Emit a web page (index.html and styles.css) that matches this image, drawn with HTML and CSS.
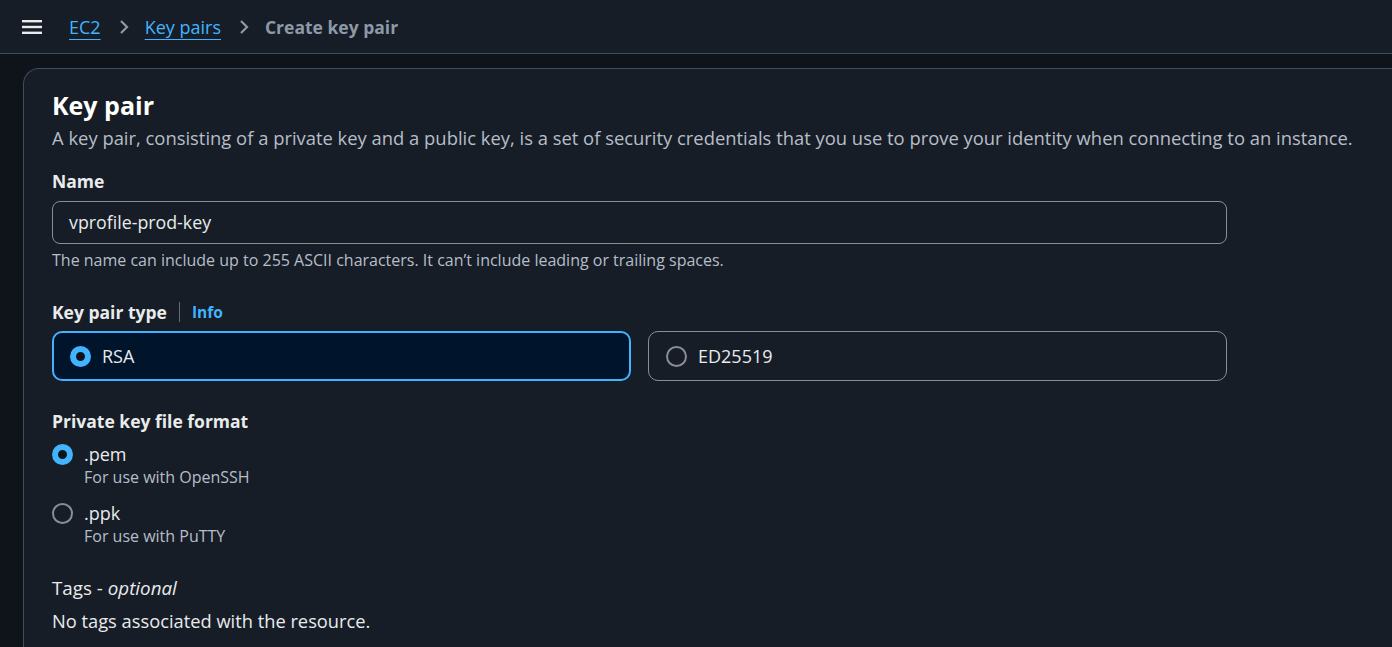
FILE: index.html
```html
<!DOCTYPE html>
<html>
<head>
<meta charset="utf-8">
<link rel="stylesheet" href="styles.css">
</head>
<body>
<header class="topbar">
  <svg class="menu" width="20" height="16" viewBox="0 0 20 16"><rect x="0" y="1" width="20" height="2.4" fill="#e9ebed"/><rect x="0" y="6.8" width="20" height="2.4" fill="#e9ebed"/><rect x="0" y="12.6" width="20" height="2.4" fill="#e9ebed"/></svg>
  <nav class="crumbs">
    <a class="crumb-link" href="#">EC2</a>
    <svg class="chev" width="12" height="16" viewBox="0 0 12 16"><path d="M3 2 L9 8 L3 14" fill="none" stroke="#8d99a8" stroke-width="2.2"/></svg>
    <a class="crumb-link" href="#">Key pairs</a>
    <svg class="chev" width="12" height="16" viewBox="0 0 12 16"><path d="M3 2 L9 8 L3 14" fill="none" stroke="#8d99a8" stroke-width="2.2"/></svg>
    <span class="crumb-current">Create key pair</span>
  </nav>
</header>
<main class="page">
  <section class="card">
    <h1 class="title">Key pair</h1>
    <p class="desc">A key pair, consisting of a private key and a public key, is a set of security credentials that you use to prove your identity when connecting to an instance.</p>

    <div class="field">
      <div class="label">Name</div>
      <div class="input"><span class="input-value">vprofile-prod-key</span></div>
      <div class="hint">The name can include up to 255 ASCII characters. It can’t include leading or trailing spaces.</div>
    </div>

    <div class="field field-type">
      <div class="label-row"><span class="label">Key pair type</span><span class="sep"></span><a class="info" href="#">Info</a></div>
      <div class="tiles">
        <div class="tile tile-on"><span class="radio radio-on"></span><span class="tile-text">RSA</span></div>
        <div class="tile"><span class="radio"></span><span class="tile-text">ED25519</span></div>
      </div>
    </div>

    <div class="field field-format">
      <div class="label">Private key file format</div>
      <div class="opt">
        <span class="radio radio-on"></span>
        <div class="opt-body"><div class="opt-title">.pem</div><div class="opt-desc">For use with OpenSSH</div></div>
      </div>
      <div class="opt">
        <span class="radio"></span>
        <div class="opt-body"><div class="opt-title">.ppk</div><div class="opt-desc">For use with PuTTY</div></div>
      </div>
    </div>

    <div class="tags">
      <div class="tags-title">Tags - <i>optional</i></div>
      <div class="tags-empty">No tags associated with the resource.</div>
    </div>
  </section>
</main>
</body>
</html>
```
FILE: styles.css
```css
* { box-sizing: border-box; }
html, body { margin: 0; padding: 0; }
body {
  background: #0f141a;
  color: #e9ebed;
  font-family: "Open Sans", "Noto Sans", sans-serif;
  height: 647px;
  overflow: hidden;
}
.topbar {
  height: 54px;
  background: #161d26;
  border-bottom: 1px solid #414d5c;
  display: flex;
  align-items: center;
  padding-left: 22px;
}
.menu { display: block; margin-right: 27px; }
.crumbs { display: flex; align-items: center; font-size: 18px; }
.crumb-link { color: #42b4ff; text-decoration: underline; text-underline-offset: 5px; text-decoration-thickness: 1px; }
.chev { margin: 0 15px 0 17px; }
.crumb-current { color: #8d99a8; font-weight: 700; font-size: 17.5px; }
.page { padding: 14px 0 0 23px; }
.card {
  background: #161d26;
  border: 1px solid #414d5c;
  border-right: none;
  border-bottom: none;
  border-radius: 16px 0 0 0;
  padding: 20px 0 40px 28px;
  min-height: 600px;
}
.title { margin: 0; font-size: 25px; font-weight: 700; line-height: 32px; color: #fff; }
.desc { margin: 4px 0 0; font-size: 18.4px; line-height: 26px; color: #b6bec9; white-space: nowrap; }
.field { margin-top: 18px; }
.label { font-size: 17.5px; font-weight: 700; line-height: 24px; }
.input {
  margin-top: 8px;
  width: 1175px;
  height: 43px;
  border: 1px solid #8c8c94;
  border-radius: 8px;
  padding: 0 0 0 16px;
  font-size: 17.8px;
  line-height: 41px;
}
.input-value { display: inline-block; }
.hint { margin-top: 5px; font-size: 16px; line-height: 22px; color: #b6bec9; }
.field-type { margin-top: 29px; }
.label-row { display: flex; align-items: center; }
.sep { width: 1px; height: 20px; background: #5f6b7a; margin: 0 12px 0 12px; }
.info { color: #42b4ff; font-weight: 700; font-size: 15.5px; text-decoration: none; }
.tiles { display: flex; gap: 17px; margin-top: 7px; }
.tile {
  width: 579px;
  height: 50px;
  border: 1px solid #8c8c94;
  border-radius: 10px;
  display: flex;
  align-items: center;
  padding-left: 17px;
}
.tile-on { border: 2px solid #42b4ff; background: #00142b; padding-left: 16px; }
.tile-text { font-size: 18px; margin-left: 11px; }
.radio {
  width: 21px; height: 21px;
  border-radius: 50%;
  border: 2px solid #8c8c94;
  flex: none;
}
.radio-on { border: 6.5px solid #42b4ff; background: #0f141a; }
.field-format { margin-top: 28px; }
.opt { display: flex; align-items: flex-start; margin-top: 9px; }
.opt + .opt { margin-top: 13px; }
.opt .radio { margin-top: 2px; }
.opt-body { margin-left: 11px; }
.opt-title { font-size: 18px; line-height: 24px; }
.opt-desc { font-size: 16px; line-height: 22px; color: #b6bec9; }
.tags { margin-top: 28px; }
.tags-title { font-size: 18.8px; line-height: 26px; }
.tags-empty { margin-top: 7px; font-size: 18.3px; line-height: 26px; }
```
